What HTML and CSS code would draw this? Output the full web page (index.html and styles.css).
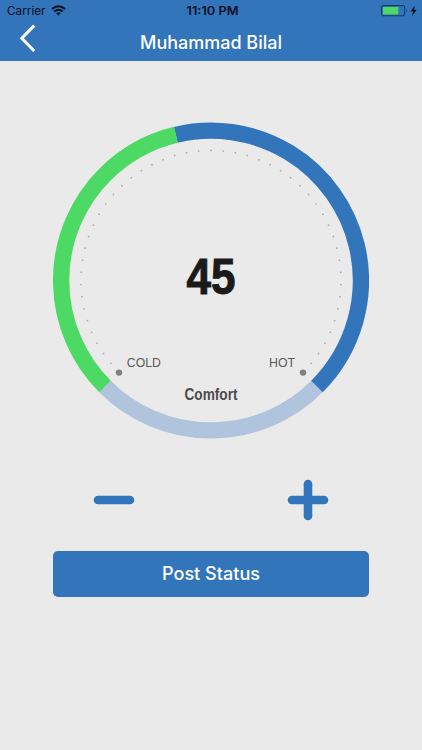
FILE: index.html
```
<!DOCTYPE html>
<html lang="en">
<head>
<meta charset="utf-8">
<title>Muhammad Bilal</title>
<link rel="stylesheet" href="styles.css">
</head>
<body>
<header class="header">
  <div class="status">
    <div class="status-left">
      <svg width="44" height="20"><text class="carrier" x="0" y="15" textLength="38.5" lengthAdjust="spacingAndGlyphs">Carrier</text></svg>
      <svg class="wifi" width="15" height="11" viewBox="0 0 15 11">
        <path d="M.9 4.1Q7.5-1.6 14.1 4.1M3.3 6.6Q7.5 3 11.7 6.6" fill="none" stroke="#07101d" stroke-width="2"/>
        <path d="M5.2 8.2Q7.5 6.4 9.8 8.2L7.5 10.6z" fill="#07101d"/>
      </svg>
    </div>
    <svg width="56" height="20"><text class="time" x="3.5" y="15" textLength="52" lengthAdjust="spacingAndGlyphs">11:10 PM</text></svg>
    <div class="status-right">
      <svg width="37" height="12" viewBox="0 0 37 12">
        <rect x=".6" y=".6" width="23" height="10.2" rx="2" fill="none" stroke="#153e6c" stroke-width="1.1"/>
        <rect x="2" y="2" width="15.3" height="7.4" rx=".5" fill="#4cd964"/>
        <path d="M25.2 4q1.6 1.7 0 3.4z" fill="#153e6c"/>
        <path d="M33.7.6 29.6 6.4h2.6L31 11l4.8-6.2h-2.8z" fill="#07101d"/>
      </svg>
    </div>
  </div>
  <div class="nav">
    <svg class="back" width="18" height="30" viewBox="0 0 18 30"><path d="M15.2 1.6 2.8 14.3 15.2 27" fill="none" stroke="#fff" stroke-width="3"/></svg>
    <svg width="144" height="30"><text class="title" x="1" y="20.5" textLength="142" lengthAdjust="spacingAndGlyphs">Muhammad Bilal</text></svg>
  </div>
</header>
<main class="main">
  <svg id="dial" class="dial" width="316" height="318" viewBox="53 122 316 318">
    <g fill="none" stroke-width="16.3">
      <circle cx="211" cy="280.5" r="149.9" stroke="#b0c5dd" pathLength="360" stroke-dasharray="90.2 269.8" transform="rotate(44.9 211 280.5)"/>
      <circle cx="211" cy="280.5" r="149.9" stroke="#3375bb" pathLength="360" stroke-dasharray="148.6 211.4" transform="rotate(256.4 211 280.5)"/>
      <circle cx="211" cy="280.5" r="149.9" stroke="#4cd964" pathLength="360" stroke-dasharray="121.5 238.5" transform="rotate(135 211 280.5)"/>
    </g>
    <g id="ticks" fill="#b0b0b0"></g>
    <circle class="stop" cx="119" cy="372.6" r="3.2"/>
    <circle class="stop" cx="303" cy="372.6" r="3.2"/>
    <text class="value" x="186.6" y="294" textLength="49" lengthAdjust="spacingAndGlyphs">45</text>
    <text class="limit" x="126.8" y="367.3" textLength="34" lengthAdjust="spacingAndGlyphs">COLD</text>
    <text class="limit" x="269" y="367.3" textLength="26" lengthAdjust="spacingAndGlyphs">HOT</text>
    <text class="comfort" x="184.5" y="400" textLength="53" lengthAdjust="spacingAndGlyphs">Comfort</text>
  </svg>
  <div class="controls">
    <svg width="42" height="42" viewBox="0 0 42 42"><path class="sign" d="M5 21H37"/></svg>
    <svg width="42" height="42" viewBox="0 0 42 42"><path class="sign" d="M5 21H37M21 5V37"/></svg>
  </div>
  <button class="post"><svg width="100" height="30"><text class="post-label" x="1" y="20.8" textLength="98" lengthAdjust="spacingAndGlyphs">Post Status</text></svg></button>
</main>
<script src="dial.js"></script>
</body>
</html>
```
FILE: dial.js
```
// Fine tick dots between the cold and hot stops, 50 steps over 270 degrees.
const ticks = document.getElementById("ticks");
for (let i = 1; i < 50; i++) {
  const a = (135 + i * 5.4) * Math.PI / 180;
  const dot = document.createElementNS("http://www.w3.org/2000/svg", "circle");
  dot.setAttribute("cx", 211 + 130 * Math.cos(a));
  dot.setAttribute("cy", 280.5 + 130 * Math.sin(a));
  dot.setAttribute("r", 0.95);
  ticks.appendChild(dot);
}
```
FILE: styles.css
```
* { box-sizing: border-box; }
body {
  margin: 0;
  height: 750px;
  background: #eaeaea;
  font-family: Inter, "Liberation Sans", sans-serif;
  overflow: hidden;
}
svg { display: block; }
.header { height: 61px; background: #3375bb; }
.status {
  display: grid;
  grid-template-columns: 1fr 56px 1fr;
  height: 21px;
}
.status-left { display: flex; padding-left: 7px; }
.wifi { margin-top: 5px; }
.status-right { display: flex; justify-content: flex-end; padding: 5px 4px 0 0; }
.carrier { font-size: 11.5px; fill: #07101d; }
.time { font-size: 11.5px; font-weight: 600; fill: #07101d; }
.nav {
  display: grid;
  grid-template-columns: 1fr 144px 1fr;
  height: 40px;
  padding-top: 7px;
}
.back { margin: -4px 0 0 19px; }
.title { font-size: 18px; font-weight: 550; fill: #fff; }
.main {
  display: flex;
  flex-direction: column;
  padding: 61px 53px 0;
}
.stop { fill: #808080; }
.value {
  font: bold 50px "Liberation Sans Narrow", "Liberation Sans", sans-serif;
  fill: #1a1a1a;
  stroke: #1a1a1a;
  stroke-width: 1;
}
.limit { font: 12.5px "Liberation Sans", sans-serif; fill: #5a5a5a; }
.comfort { font: bold 16px "Liberation Sans Narrow", "Liberation Sans", sans-serif; fill: #4b4b4b; }
.controls {
  display: flex;
  justify-content: space-between;
  padding: 39px 40px 0 40px;
}
.sign { fill: none; stroke: #3375bb; stroke-width: 8.6; stroke-linecap: round; }
.post {
  display: flex;
  align-items: center;
  justify-content: center;
  height: 46px;
  margin-top: 30px;
  padding: 0;
  border: 0;
  border-radius: 5px;
  background: #3375bb;
}
.post-label { font: 500 18px Inter, sans-serif; fill: #fff; }
```
